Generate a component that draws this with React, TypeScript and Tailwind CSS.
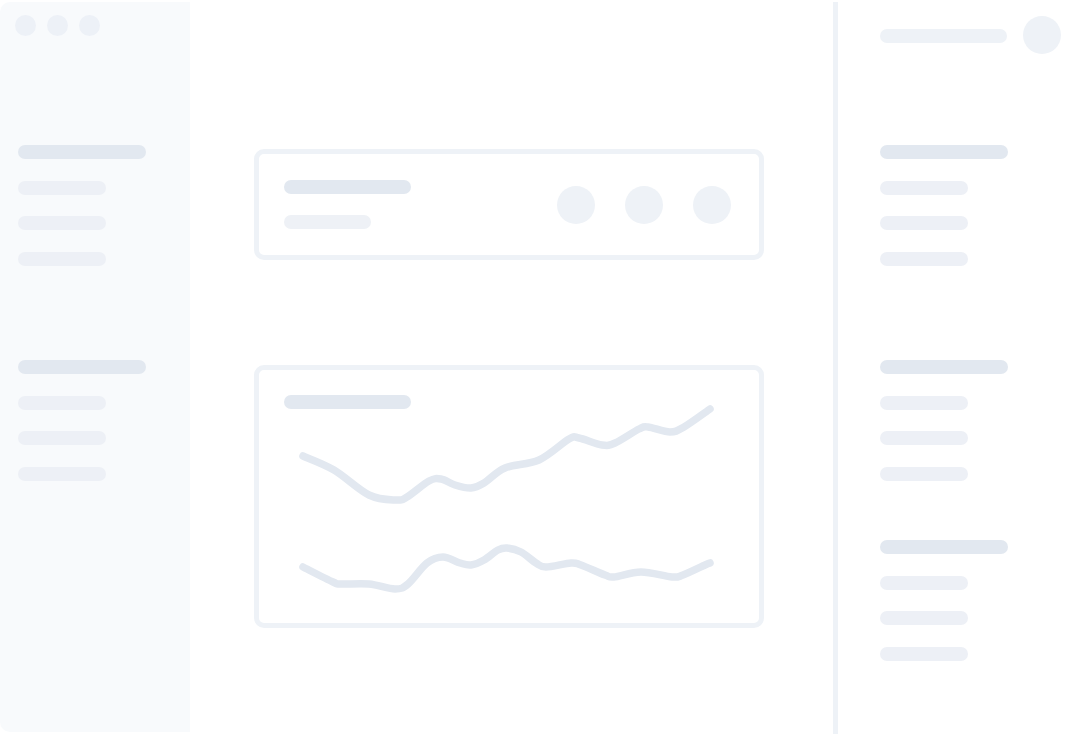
import React from 'react';

type Pt = [number, number];

// upper series of the chart card, page coordinates
const lineA: Pt[] = [
  [303, 456], [334, 470], [369, 495], [396, 500], [407, 497], [429, 481], [441, 479],
  [455, 485], [471, 488], [484, 483], [505, 468], [539, 460], [569, 439], [579, 438],
  [602, 445], [615, 443], [639, 429], [648, 427], [670, 432], [684, 427], [710, 409],
];

// lower series
const lineB: Pt[] = [
  [303, 567], [333, 582], [341, 584], [369, 584], [395, 589], [408, 584], [427, 563],
  [443, 557], [460, 563], [471, 565], [484, 560], [498, 550], [507, 548], [521, 552],
  [536, 563], [546, 567], [571, 563], [581, 565], [605, 575], [614, 577], [641, 572],
  [672, 577], [683, 575], [705, 565], [710, 563],
];

function smooth(pts: Pt[]) {
  let d = `M${pts[0][0]} ${pts[0][1]}`;
  for (let i = 0; i < pts.length - 1; i++) {
    const p0 = pts[i - 1] || pts[i];
    const p1 = pts[i];
    const p2 = pts[i + 1];
    const p3 = pts[i + 2] || p2;
    const c1x = p1[0] + (p2[0] - p0[0]) / 6;
    const c1y = p1[1] + (p2[1] - p0[1]) / 6;
    const c2x = p2[0] - (p3[0] - p1[0]) / 6;
    const c2y = p2[1] - (p3[1] - p1[1]) / 6;
    d += ` C${c1x} ${c1y} ${c2x} ${c2y} ${p2[0]} ${p2[1]}`;
  }
  return d;
}

function Head() {
  return <div className="h-[14px] w-[128px] rounded-full bg-[#e2e8f0]" />;
}

function Line() {
  return <div className="h-[14px] w-[88px] rounded-full bg-[#edf0f6]" />;
}

function Group({ className = '' }: { className?: string }) {
  return (
    <div className={`flex flex-col gap-[21.5px] ${className}`}>
      <Head />
      <Line />
      <Line />
      <Line />
    </div>
  );
}

export default function App() {
  return (
    <div className="flex h-[734px] w-[1080px] overflow-hidden bg-white">
      {/* left sidebar */}
      <aside className="my-[2px] flex w-[190px] flex-col rounded-l-[10px] bg-[#f8fafc] pl-[18px] pt-[13px]">
        <div className="-ml-[3px] flex gap-[11px]">
          <span className="h-[21px] w-[21px] rounded-full bg-[#edf1f7]" />
          <span className="h-[21px] w-[21px] rounded-full bg-[#edf1f7]" />
          <span className="h-[21px] w-[21px] rounded-full bg-[#edf1f7]" />
        </div>
        <Group className="mt-[109px]" />
        <Group className="mt-[94.5px]" />
      </aside>

      {/* main */}
      <main className="flex w-[643px] flex-col pl-[64px] pt-[149px]">
        <section className="flex h-[111px] w-[510px] items-center justify-between rounded-[10px] border-[5px] border-[#eef2f7] pl-[25px] pr-[28px]">
          <div className="flex flex-col gap-[21px]">
            <div className="h-[14px] w-[127px] rounded-full bg-[#e2e8f0]" />
            <div className="h-[14px] w-[87px] rounded-full bg-[#eef1f6]" />
          </div>
          <div className="flex gap-[30px]">
            <span className="h-[38px] w-[38px] rounded-full bg-[#eef2f7]" />
            <span className="h-[38px] w-[38px] rounded-full bg-[#eef2f7]" />
            <span className="h-[38px] w-[38px] rounded-full bg-[#eef2f7]" />
          </div>
        </section>

        <section className="mt-[105px] flex h-[263px] w-[510px] flex-col rounded-[10px] border-[5px] border-[#eef2f7] pl-[25px] pt-[25px]">
          <div className="h-[14px] w-[127px] rounded-full bg-[#e2e8f0]" />
          <svg width="440" height="200" viewBox="284 409 440 200" className="overflow-visible">
            <path d={smooth(lineA)} fill="none" stroke="#e2e8f0" strokeWidth="7.5" strokeLinecap="round" strokeLinejoin="round" />
            <path d={smooth(lineB)} fill="none" stroke="#e2e8f0" strokeWidth="7.5" strokeLinecap="round" strokeLinejoin="round" />
          </svg>
        </section>
      </main>

      {/* divider */}
      <div className="mt-[2px] w-[5px] bg-[#eef2f7]" />

      {/* right panel */}
      <aside className="flex flex-1 flex-col pl-[42px] pt-[16px]">
        <div className="flex items-center gap-[16px]">
          <div className="mt-[2px] h-[14px] w-[127px] rounded-full bg-[#eef2f7]" />
          <span className="h-[38px] w-[38px] rounded-full bg-[#eef2f7]" />
        </div>
        <Group className="mt-[91px]" />
        <Group className="mt-[94.5px]" />
        <Group className="mt-[59.5px]" />
      </aside>
    </div>
  );
}
